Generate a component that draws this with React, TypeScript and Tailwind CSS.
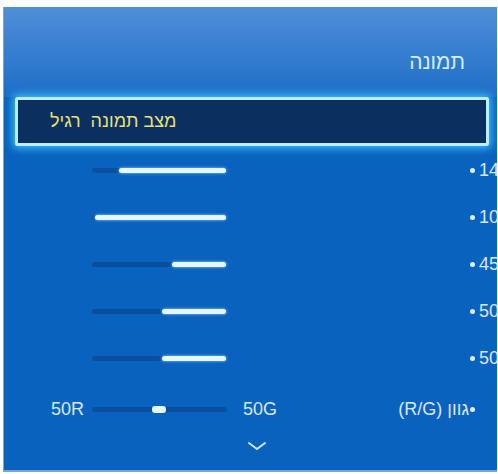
const font = { fontFamily: '"Liberation Sans", "DejaVu Sans", Arial, sans-serif' };

const rows = [
  { value: "14", fill: 80 },
  { value: "10", fill: 98 },
  { value: "45", fill: 40 },
  { value: "50", fill: 48 },
  { value: "50", fill: 48 },
];

function Slider({ fill }: { fill: number }) {
  return (
    <div className="relative h-[5px] w-[134px] rounded-full bg-[#0a4f9e]">
      <div
        className="absolute right-0 top-0 h-[5px] rounded-full bg-[#e4f6ff] shadow-[0_0_3px_#8fd8ff]"
        style={{ width: `${fill}%` }}
      />
    </div>
  );
}

export default function App() {
  return (
    <div className="h-[474px] w-[498px] bg-white pb-[2px] pl-[3px] pr-[1px] pt-[7px]" style={font}>
      <div className="flex h-full flex-col overflow-hidden border-b-2 border-l border-[#7fa3cc] bg-[#0a62bf]">
        {/* כותרת */}
        <div className="flex h-[90px] items-center justify-end bg-gradient-to-b from-[#4e8fd6] to-[#1c6dca] pr-[32px] pt-[20px]">
          <span dir="rtl" className="text-[21px] text-[#d2f0fb]">תמונה</span>
        </div>

        {/* שורה נבחרת */}
        <div className="mx-[11px] mr-[8px] rounded-[2px] border-[3px] border-[#b8f0ff] shadow-[0_0_8px_2px_#3fc4ff,inset_0_0_3px_#3fc4ff]">
          <div className="flex h-[43px] items-center bg-[#0b2f5e] pl-[32px]">
            <span dir="rtl" className="flex gap-[10px] text-[18px] text-[#e6e276]">
              <span>מצב תמונה</span>
              <span>רגיל</span>
            </span>
          </div>
        </div>

        {/* הגדרות */}
        <div className="flex flex-col pt-px">
          {rows.map((r, i) => (
            <div key={i} className="flex h-[47px] items-center pl-[88px]">
              <Slider fill={r.fill} />
              <div className="ml-auto mr-[-2px] flex items-center gap-[4px]">
                <span className="h-[5px] w-[5px] rounded-full bg-[#dfeefb]" />
                <span className="text-[18px] text-[#d8e8f8]">{r.value}</span>
              </div>
            </div>
          ))}
          <div className="mt-[7px] flex h-[40px] items-center pl-[47px] text-[18px] text-[#d8e8f8]">
            <span className="w-[41px]">50R</span>
            <div className="relative h-[5px] w-[135px] rounded-full bg-[#0a4f9e]">
              <div className="absolute left-[60px] top-[-1px] h-[7px] w-[14px] rounded-[3px] bg-[#e4f6ff]" />
            </div>
            <span className="ml-[16px]">50G</span>
            <div className="ml-auto mr-[22px] flex items-center gap-[1px]">
              <span dir="rtl">גוון (R/G)</span>
              <span className="h-[5px] w-[5px] rounded-full bg-[#dfeefb]" />
            </div>
          </div>
          <div className="flex justify-center pl-[12px] pt-[12px]">
            <svg width="20" height="10" viewBox="0 0 20 10" fill="none">
              <path d="M2 2 L10 8 L18 2" stroke="#cfe6fa" strokeWidth="2" strokeLinecap="round" strokeLinejoin="round" />
            </svg>
          </div>
        </div>
      </div>
    </div>
  );
}
